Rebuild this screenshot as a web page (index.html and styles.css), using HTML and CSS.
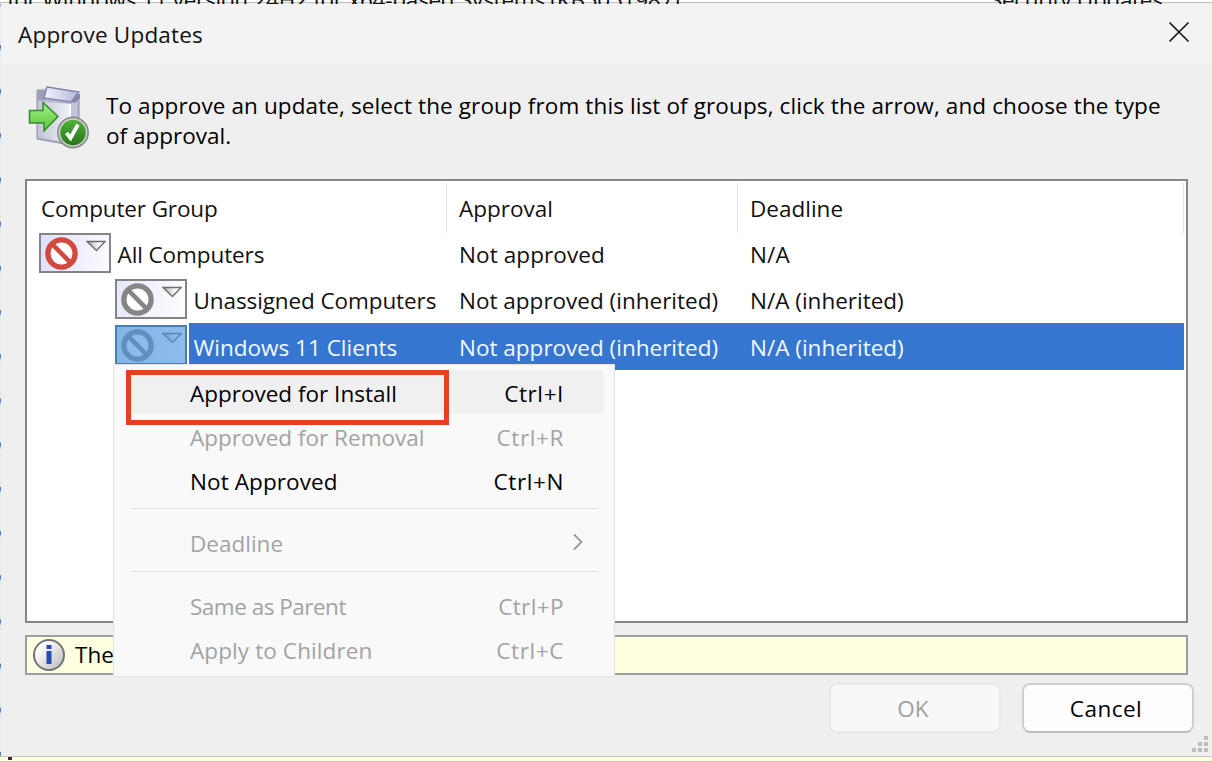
FILE: index.html
```html
<!DOCTYPE html>
<html lang="en">
<head>
<meta charset="utf-8">
<title>Approve Updates</title>
<link rel="stylesheet" href="styles.css">
</head>
<body>
<svg class="defs" width="0" height="0" aria-hidden="true">
  <defs>
    <linearGradient id="tri" x1="0" y1="0" x2="1" y2="0"><stop offset="0" stop-color="#aaa"/><stop offset=".7" stop-color="#fff"/></linearGradient>
    <linearGradient id="box" x1="0" y1="0" x2="1" y2="0"><stop offset="0" stop-color="#c2c5d6"/><stop offset="1" stop-color="#f0f2f8"/></linearGradient>
    <linearGradient id="lid" x1="0" y1="0" x2="1" y2="0"><stop offset="0" stop-color="#f2f3ff"/><stop offset="1" stop-color="#b3b6dc"/></linearGradient>
    <linearGradient id="arrow" x1="0" y1="0" x2="0" y2="1"><stop offset="0" stop-color="#a1f284"/><stop offset="1" stop-color="#58c43b"/></linearGradient>
    <linearGradient id="ok" x1="0" y1="0" x2="0" y2="1"><stop offset="0" stop-color="#56b83c"/><stop offset="1" stop-color="#246f17"/></linearGradient>
    <linearGradient id="info" x1="0" y1="0" x2="1" y2="1"><stop offset=".2" stop-color="#fff"/><stop offset="1" stop-color="#b9b9b9"/></linearGradient>
    <symbol id="deny" viewBox="0 0 32 32">
      <circle cx="16" cy="16" r="13.2" fill="#fff" stroke="currentColor" stroke-width="5.2"/>
      <path d="M7 7 25 25" stroke="currentColor" stroke-width="4.4"/>
    </symbol>
    <symbol id="drop" viewBox="0 0 20 12"><path d="M1 1.500H19L10.500 10.500Z" fill="url(#tri)" stroke="#6d6d6d" stroke-width="1.3"/></symbol>
  </defs>
</svg>
<div class="screen">
  <div class="behind-top"><span class="behind-name">for Windows 11 version 24H2 for x64-based Systems (KB5051987)</span><span class="behind-type">Security Updates</span></div>
  <div class="middle">
    <div class="behind-left"></div>
    <main class="dialog">
      <header class="titlebar"><h1 class="title">Approve Updates</h1>
        <svg class="close" width="22" height="22" viewBox="0 0 22 22"><path d="M1.5 1.5 20.5 20.5M20.5 1.5 1.5 20.5" fill="none" stroke="#1a1a1a" stroke-width="1.7"/></svg>
      </header>
      <section class="intro">
        <svg class="package" width="62" height="64" viewBox="0 0 62 64">
          <path d="M9 4H18V2L51 9V53L42 59 9 53Z" fill="#b4b7cb" stroke="#8c8faa"/>
          <path d="M10 15 42 18V57L10 51Z" fill="url(#box)"/>
          <path d="M42 18 49 13V50L42 57Z" fill="#c3c6d9"/>
          <path d="M42 18V57" stroke="#fff" stroke-width="2"/>
          <path d="M10 5H18V14H10Z" fill="#9b9fbb"/>
          <path d="M19 1 51 6 43 16 16 12Z" fill="url(#lid)" stroke="#8185a6" stroke-width="1.3"/>
          <path d="M43 16 48 8H52V12L47 17Z" fill="#8588ac"/>
          <path d="M1.500 24.500H15V16.500L30 30.500 16 45V37H1.500Z" fill="url(#arrow)" stroke="#368a2e" stroke-width="1.5"/>
          <circle cx="45" cy="46.500" r="15" fill="url(#ok)" stroke="#8a8d8c" stroke-width="2"/>
          <circle cx="45" cy="46.500" r="13.500" fill="none" stroke="#d2d6d0" stroke-width="1.500"/>
          <path d="M38.500 47 42.500 52 50 38.500" fill="none" stroke="#fff" stroke-width="3.800"/>
        </svg>
        <p class="intro-text"><span class="line-one">To approve an update, select the group from this list of groups, click the arrow, and choose the type</span><br><span class="line-two">of approval.</span></p>
      </section>
      <section class="list">
        <div class="row head"><div class="cell c-head"><span class="t-group">Computer Group</span></div><div class="cell"><span>Approval</span></div><div class="cell"><span>Deadline</span></div></div>
        <div class="row"><div class="cell lead">
          <div class="state"><svg class="deny deny-red" width="33" height="33"><use href="#deny"/></svg><svg class="drop" width="20" height="12"><use href="#drop"/></svg></div><span class="label t-all">All Computers</span></div>
          <div class="cell"><span class="t-not">Not approved</span></div><div class="cell"><span class="t-na">N/A</span></div></div>
        <div class="row"><div class="cell lead child">
          <div class="state"><svg class="deny" width="33" height="33"><use href="#deny"/></svg><svg class="drop" width="20" height="12"><use href="#drop"/></svg></div><span class="label t-un">Unassigned Computers</span></div>
          <div class="cell"><span>Not approved (inherited)</span></div><div class="cell"><span>N/A (inherited)</span></div></div>
        <div class="row selected"><div class="cell lead child">
          <div class="state"><svg class="deny" width="33" height="33"><use href="#deny"/></svg><svg class="drop" width="20" height="12"><use href="#drop"/></svg></div><span class="label t-win">Windows 11 Clients</span></div>
          <div class="cell"><span>Not approved (inherited)</span></div><div class="cell"><span>N/A (inherited)</span></div></div>
      </section>
      <section class="notice">
        <svg width="34" height="34" viewBox="0 0 34 34"><circle cx="17" cy="17" r="15" fill="url(#info)" stroke="#737373" stroke-width="2"/><path d="M14.500 7h5v4h-5zM14.500 13h5v13h-5z" fill="#2449b5"/></svg>
        <span class="t-the">The</span>
      </section>
      <footer class="actions"><button class="btn disabled"><span class="t-ok">OK</span></button><button class="btn"><span class="t-cancel">Cancel</span></button></footer>
      <svg class="grip" width="17" height="17" viewBox="0 0 17 17" fill="#bdbdbd"><path d="M12 0h4v4h-4zM6 6h4v4H6zM12 6h4v4h-4zM0 12h4v4H0zM6 12h4v4H6zM12 12h4v4h-4z"/></svg>
    </main>
  </div>
  <div class="behind-bottom"><i class="speck"></i></div>
  <nav class="menu">
    <div class="item hover"><span>Approved for Install</span><span class="key">Ctrl+I</span></div>
    <div class="item off"><span>Approved for Removal</span><span class="key">Ctrl+R</span></div>
    <div class="item"><span class="m-not">Not Approved</span><span class="key">Ctrl+N</span></div>
    <hr class="rule">
    <div class="item off flat"><span>Deadline</span><svg class="chevron" width="12" height="18" viewBox="0 0 12 18"><path d="M2 1.500 9.500 9 2 16.500" fill="none" stroke="#999" stroke-width="1.800"/></svg></div>
    <hr class="rule second">
    <div class="item off"><span class="m-same">Same as Parent</span><span class="key k-p">Ctrl+P</span></div>
    <div class="item off"><span class="m-apply">Apply to Children</span><span class="key">Ctrl+C</span></div>
  </nav>
  <div class="callout"></div>
</div>
</body>
</html>
```
FILE: styles.css
```css
* { box-sizing: border-box; }
body { margin: 0; font: 22.5px/30px "Open Sans", "Noto Sans", sans-serif; color: #111; }
.defs { position: absolute; }
.screen { position: relative; width: 1212px; height: 762px; overflow: hidden; display: flex; flex-direction: column; background: #efefef; }
span { white-space: nowrap; }

/* window behind the dialog */
.behind-top { height: 4px; overflow: hidden; display: flex; background: linear-gradient(#fff 2px, #bdbdbd 2px 3px, #f3f3f3 3px); line-height: 30px; padding-left: 7px; }
.behind-top span { margin-top: -15px; }
.behind-name { width: 983px; letter-spacing: -.24px; }
.behind-type { letter-spacing: -.3px; }
.middle { display: flex; height: 752px; }
.behind-left { width: 1px; background: linear-gradient(#4d78bd 0 3px, #a9dcf2 5px, #e9e9e9 7px) 0 41px / 1px 44.200px; }
.behind-bottom { height: 6px; background: #ffffe1; border-top: 1px solid #c9c9ba; border-bottom: 1px solid #c8c8b5; padding-left: 8px; }
.speck { display: block; width: 4px; height: 3px; background: #42203a; }

.dialog { position: relative; width: 1211px; background: #efefef; }
.titlebar { height: 60px; background: #f3f3f3; display: flex; justify-content: space-between; padding: 16px 22px 0 17px; }
.title { margin: 0; font: inherit; letter-spacing: .2px; }
.close { margin-top: 1px; }
.intro { display: flex; height: 115px; padding: 22px 0 0 27px; }
.intro-text { margin: 5px 0 0 16px; line-height: 30px; color: #000; }
.line-one { letter-spacing: .11px; }

.list { margin: 0 24px; height: 444px; background: #fff; border: 2px solid #828790; padding: 4px 2px 0 0; }
.row { display: grid; grid-template-columns: 419px 291px 1fr; height: 46.200px; }
.head { height: 45.500px; }
.cell { display: flex; align-items: center; padding: 3px 0 0 13px; }
.head .cell { height: 50px; margin-top: -2px; padding-top: 1px; border-right: 1px solid #e2e2e2; width: calc(100% + 1px); }
.head .cell:last-child { width: 100%; }
.head .c-head { padding-left: 14px; }
.t-group { letter-spacing: -.13px; }
.t-not, .t-na { letter-spacing: .1px; }
.cell.lead { padding: 0 0 0 12px; align-items: stretch; }
.cell.child { padding-left: 88px; }
.state { display: flex; width: 72px; height: 40px; margin-top: 2px; border: 2px solid #858585; background: linear-gradient(100deg, #dde0fb, #fbfbff); padding: 2px 0 0 4px; gap: 8px; flex: none; }
.child .state { background: linear-gradient(100deg, #e6e8f8, #fdfdff); }
.deny { color: #858585; flex: none; }
.deny-red { color: #d24a3e; }
.drop { margin-top: 3.500px; flex: none; }
.label { display: flex; align-items: center; padding: 3px 0 0 4.500px; margin-left: 2px; flex: 1; }
.t-all, .t-un { letter-spacing: -.1px; }
.selected { height: 47px; }
.selected .cell { background: #3577d0; color: #f4f8ff; }
.selected .cell.lead { background: none; }
.selected .label { background: #3577d0; }
.selected .state { position: relative; border-color: #4c7eac; }
.selected .state::after { content: ""; position: absolute; inset: 0; background: rgba(78, 150, 222, .64); }

.notice { display: flex; align-items: center; margin: 12px 24px 0; height: 40px; background: #ffffe1; border: 2px solid #9e9e9e; padding-left: 5px; gap: 9px; color: #000; }
.actions { display: flex; justify-content: flex-end; gap: 21px; padding: 8px 18px 0 0; }
.btn { width: 172px; height: 50px; border: 2px solid #d0d0d0; border-bottom-color: #bdbdbd; border-radius: 8px; background: #fdfdfd; font: inherit; color: #000; padding: 2px 4px 0 0; }
.btn.disabled { background: #f8f8f8; border-color: #e8e8e8; color: #a0a0a0; }
.t-cancel { letter-spacing: .5px; }
.grip { position: absolute; right: 3px; bottom: 3px; }

.menu { position: absolute; left: 113px; top: 364px; width: 502px; height: 313px; background: #f9f9f9; border: 1px solid #e2e2e2; padding: 5px 10px 5px 12px; }
.item { display: flex; justify-content: space-between; align-items: center; height: 44.200px; padding: 4px 41px 0 64px; border-radius: 5px; color: #000; }
.hover { background: #f0f0f0; }
.item.off { color: #a3a3a3; }
.item.flat { padding-top: 2px; }
.key { letter-spacing: .6px; margin-right: -1px; }
.k-p { letter-spacing: .4px; }
.m-not { letter-spacing: .1px; }
.m-same { letter-spacing: -.5px; }
.m-apply { letter-spacing: .1px; }
.rule { margin: 5px 6px 12px 5px; border: 0; border-top: 1px solid #dedede; }
.rule.second { margin-top: 6px; margin-bottom: 11px; }
.chevron { margin-right: -21px; margin-top: -3px; }
.callout { position: absolute; left: 126px; top: 370px; width: 323px; height: 55px; border: 5px solid #e93e26; }
```
